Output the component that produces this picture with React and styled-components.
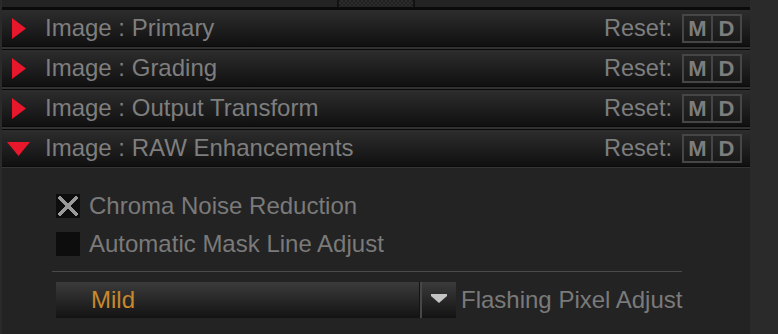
import React from 'react';
import styled, { createGlobalStyle } from 'styled-components';

const GlobalStyle = createGlobalStyle`
  html, body { margin: 0; padding: 0; background: #2a2a2a; }
  body { font-family: "Liberation Sans", Arial, Helvetica, sans-serif; }
`;

const Page = styled.div`
  width: 778px;
  height: 334px;
  display: flex;
  background: #2a2a2a;
  overflow: hidden;
`;

const Panel = styled.div`
  margin-left: 2px;
  width: 748px;
  display: flex;
  flex-direction: column;
  background: #232323;
`;

const TopBar = styled.div`
  height: 7px;
  border-bottom: 2px solid #0b0b0b;
  display: flex;
  padding-left: 335px;
`;

const Grip = styled.div`
  width: 74px;
  height: 7px;
  border-left: 2px solid #121212;
  border-right: 2px solid #121212;
  background: conic-gradient(#2c2c2c 25%, #202020 0 50%, #2c2c2c 0 75%, #202020 0) 0 0 / 4px 4px;
`;

const HeaderList = styled.div`
  display: flex;
  flex-direction: column;
  gap: 2px;
  background: #323232;
`;

const Header = styled.div`
  height: 36px;
  border-top: 1px solid #0a0a0a;
  border-bottom: 1px solid #0a0a0a;
  background: linear-gradient(#2d2d2d, #101010);
  display: flex;
  align-items: center;
  padding-right: 8px;
`;

const ArrowSlot = styled.div`
  width: 38px;
  padding-left: 5px;
  height: 24px;
  display: flex;
  align-items: center;
`;

const Title = styled.div`
  flex: 1;
  font-size: 24px;
  color: #7e7e7e;
  white-space: nowrap;
`;

const ResetLabel = styled.span`
  font-size: 23.5px;
  color: #7e7e7e;
  margin-right: 10px;
`;

const BtnGroup = styled.div`
  display: flex;
  gap: 2px;
  padding: 2px;
  background: #464646;
`;

const Btn = styled.div`
  width: 27px;
  height: 25px;
  display: flex;
  align-items: center;
  justify-content: center;
  background: linear-gradient(#272727, #191919);
  color: #7d7d7d;
  font-weight: bold;
  font-size: 22px;
  line-height: 25px;
`;

const Content = styled.div`
  flex: 1;
  border-top: 1px solid #353535;
  padding: 26px 0 0 54px;
  display: flex;
  flex-direction: column;
`;

const CheckRow = styled.div`
  display: flex;
  align-items: center;
  height: 24px;
  margin-bottom: 14px;
`;

const Box = styled.div`
  width: 24px;
  height: 24px;
  background: #0d0d0d;
  display: flex;
  align-items: center;
  justify-content: center;
  margin-right: 9px;
`;

const Label = styled.span`
  font-size: 24px;
  color: #7a7a7a;
  white-space: nowrap;
`;

const Separator = styled.div`
  margin: 1px 0 0 -4px;
  width: 630px;
  height: 1px;
  background: #4a4a4a;
`;

const SelectRow = styled.div`
  margin-top: 10px;
  display: flex;
  align-items: center;
`;

const Select = styled.div`
  display: flex;
  width: 400px;
  height: 36px;
  background: linear-gradient(#3b3b3b, #131313);
`;

const SelectValue = styled.div`
  flex: 1;
  padding-left: 35px;
  border-right: 1px solid #141414;
  display: flex;
  align-items: center;
  font-size: 24px;
  color: #c8882c;
`;

const SelectButton = styled.div`
  width: 36px;
  border-left: 2px solid #474747;
  display: flex;
  align-items: center;
  justify-content: center;
  padding-bottom: 3px;
  box-sizing: border-box;
`;

const SelectLabel = styled(Label)`
  margin-left: 5px;
`;

const Arrow = ({ open }) => (
  <svg width="24" height="24" viewBox="0 0 24 24">
    {open ? (
      <polygon points="0,6 23,6 11.5,20" fill="#e8172c" />
    ) : (
      <polygon points="5,2 19,12.5 5,23" fill="#e8172c" />
    )}
  </svg>
);

const sections = [
  { title: 'Image : Primary', open: false },
  { title: 'Image : Grading', open: false },
  { title: 'Image : Output Transform', open: false },
  { title: 'Image : RAW Enhancements', open: true },
];

const Cross = () => (
  <svg width="24" height="24" viewBox="0 0 24 24" shapeRendering="crispEdges">
    <path d="M4 4 L20 20 M20 4 L4 20" stroke="#9a9a9a" strokeWidth="4" strokeLinecap="square" />
  </svg>
);

export default function App() {
  return (
    <>
      <GlobalStyle />
      <Page>
        <Panel>
          <TopBar>
            <Grip />
          </TopBar>
          <HeaderList>
            {sections.map((s) => (
              <Header key={s.title}>
                <ArrowSlot>
                  <Arrow open={s.open} />
                </ArrowSlot>
                <Title>{s.title}</Title>
                <ResetLabel>Reset:</ResetLabel>
                <BtnGroup>
                  <Btn>M</Btn>
                  <Btn>D</Btn>
                </BtnGroup>
              </Header>
            ))}
          </HeaderList>
          <Content>
            <CheckRow>
              <Box>
                <Cross />
              </Box>
              <Label>Chroma Noise Reduction</Label>
            </CheckRow>
            <CheckRow>
              <Box />
              <Label>Automatic Mask Line Adjust</Label>
            </CheckRow>
            <Separator />
            <SelectRow>
              <Select>
                <SelectValue>Mild</SelectValue>
                <SelectButton>
                  <svg width="16" height="9" viewBox="0 0 16 9">
                    <polygon points="0,0 16,0 16,2 8,9 0,2" fill="#c4c4c4" />
                  </svg>
                </SelectButton>
              </Select>
              <SelectLabel>Flashing Pixel Adjust</SelectLabel>
            </SelectRow>
          </Content>
        </Panel>
      </Page>
    </>
  );
}
